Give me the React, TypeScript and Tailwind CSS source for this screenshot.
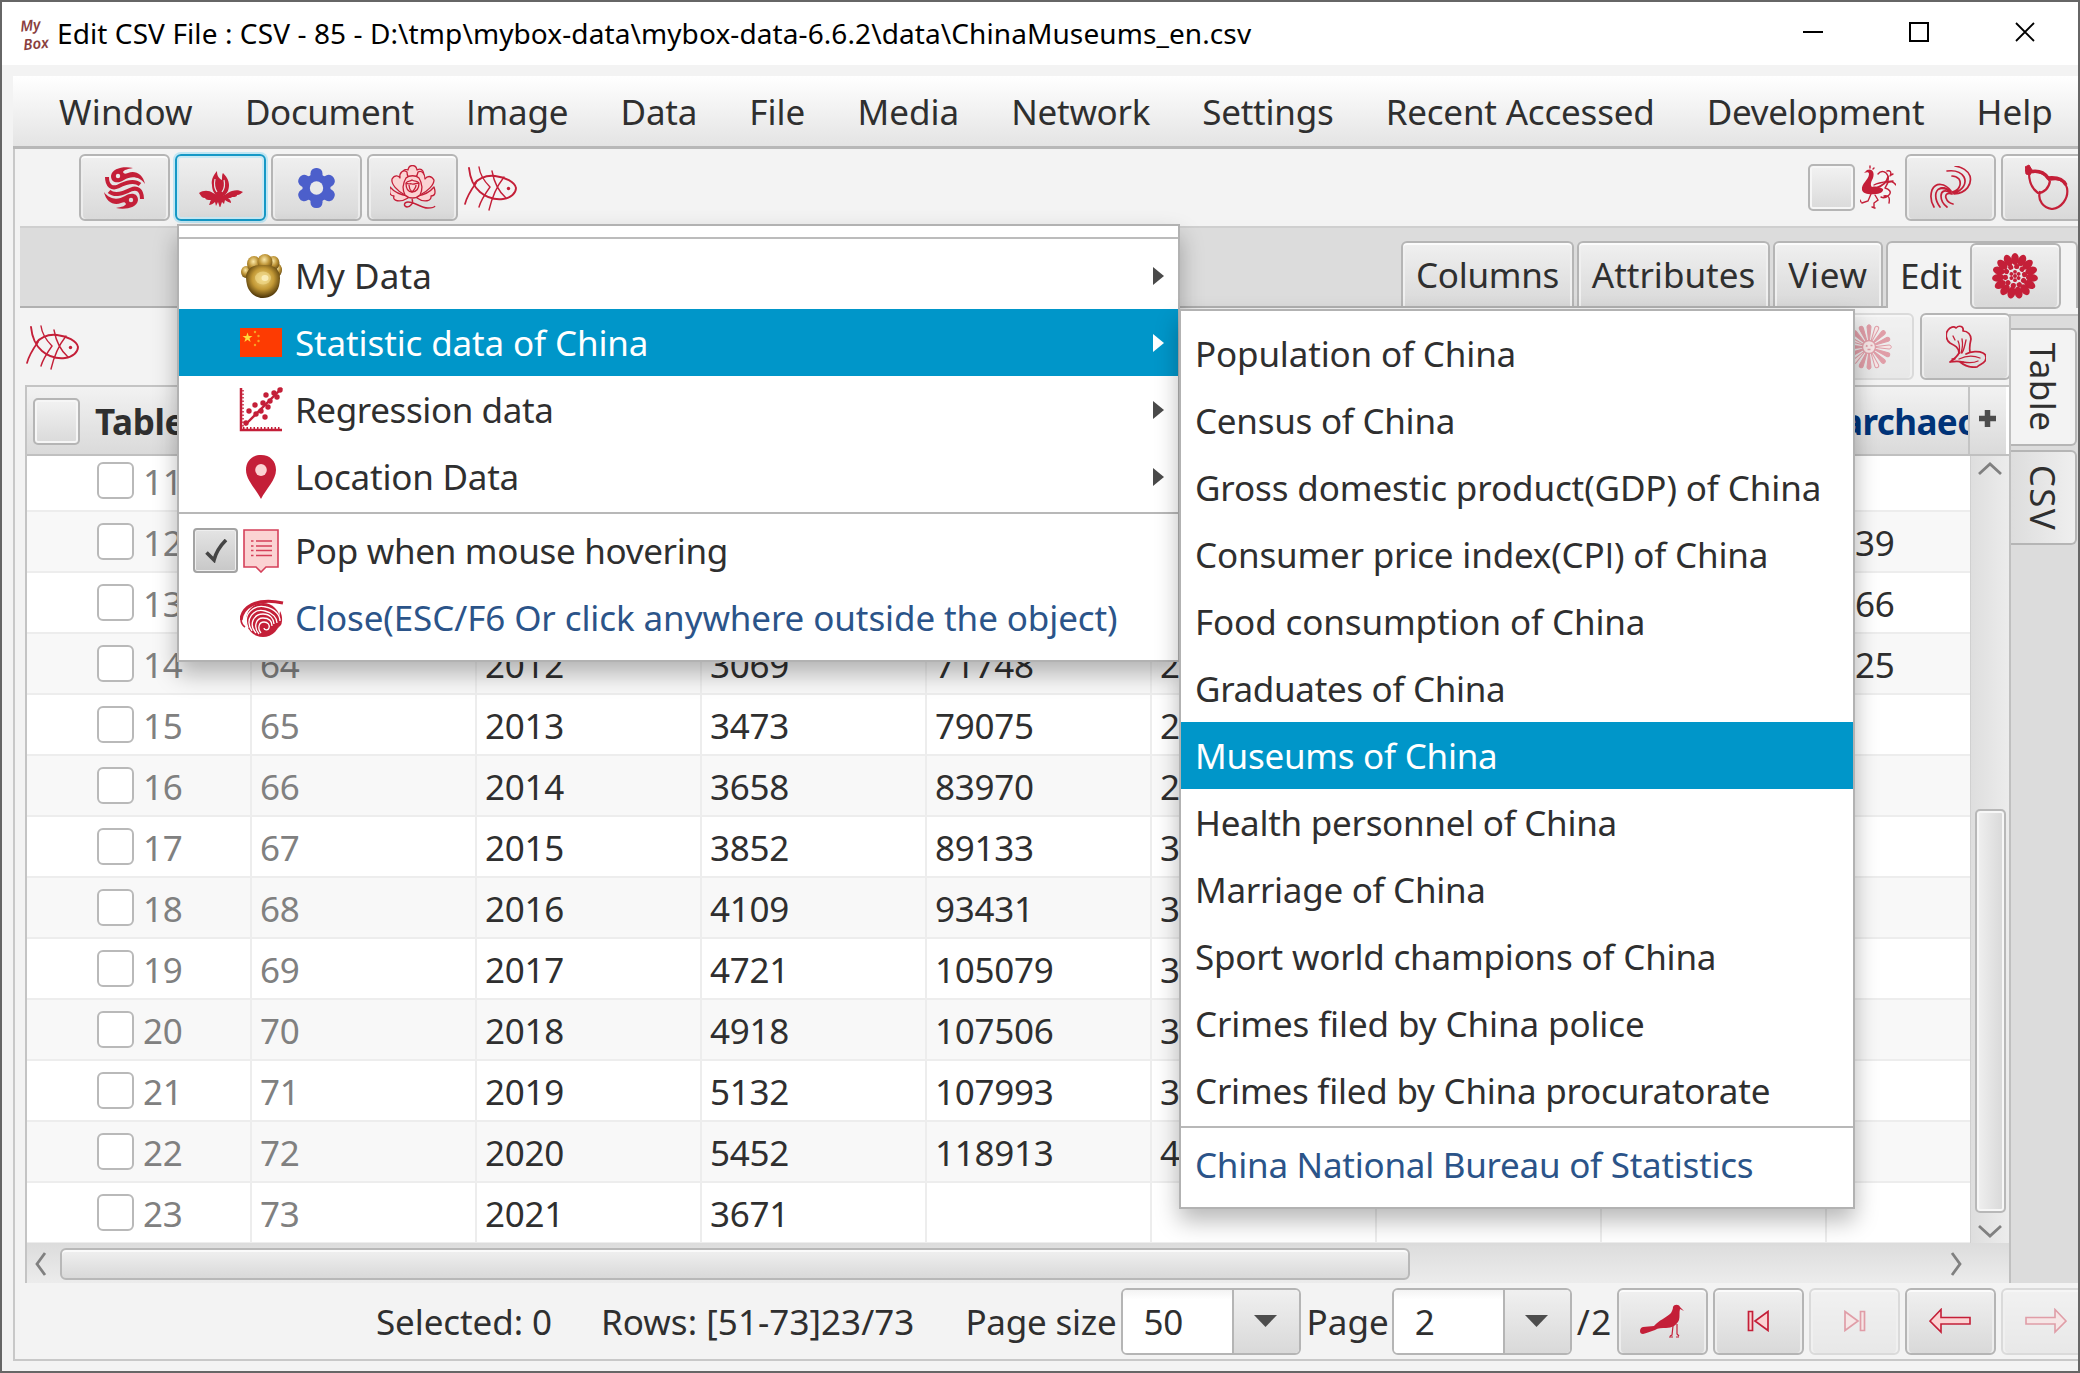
import { useLayoutEffect, useRef, type ReactNode } from "react";

const RED = "#c41f38";
const PINK = "#fbd3d3";

/* Text stretched or tightened by letter spacing so that it fills a given width. */
function Fit({ text, w, className = "" }: { text: string; w: number; className?: string }) {
  const ref = useRef<HTMLSpanElement>(null);
  useLayoutEffect(() => {
    const el = ref.current;
    if (!el) return;
    el.style.letterSpacing = "0px";
    el.style.letterSpacing = `${(w - el.offsetWidth) / text.length}px`;
  }, [text, w]);
  return (
    <span ref={ref} className={`inline-block shrink-0 whitespace-pre ${className}`}>
      {text.split(/(I)/).map((p, i) =>
        p === "I" ? (
          <span key={i} className="font-['Open_Sans']">
            I
          </span>
        ) : (
          p
        ),
      )}
    </span>
  );
}

function Btn({
  children,
  className = "",
  disabled = false,
  focused = false,
}: {
  children?: ReactNode;
  className?: string;
  disabled?: boolean;
  focused?: boolean;
}) {
  return (
    <div
      className={`flex h-[67px] w-[91px] shrink-0 items-center justify-center rounded-[6px] border-2 bg-linear-to-b from-[#f0f0f0] to-[#d9d9d9] ${
        focused
          ? "border-[#1598c6] shadow-[0_0_0_2px_#bfe6f3,inset_0_0_0_2px_#c9e9f4]"
          : "border-[#b5b5b5] shadow-[inset_0_2px_0_#fbfbfb,inset_2px_0_0_#ededed,inset_-2px_0_0_#ededed]"
      } ${disabled ? "opacity-40" : ""} ${className}`}
    >
      {children}
    </div>
  );
}

function Svg({ w, h, children, className = "" }: { w: number; h: number; children: ReactNode; className?: string }) {
  return (
    <svg width={w} height={h} viewBox={`0 0 ${w} ${h}`} fill="none" className={`shrink-0 ${className}`}>
      {children}
    </svg>
  );
}

function Swirl() {
  const fish = "M29 1C20-1 8 1 7 9c0 7 7 8 13 4 7-4 15-4 21 4-2-10-10-14-17-11-3 1-4 1-5-1 1-2 4-3 10-4z";
  return (
    <Svg w={41} h={43} className="mt-[2px]">
      <path d={fish} fill={RED} />
      <path d={fish} fill={RED} transform="rotate(180 20.500 21)" />
      <path d="M3 10C3 19 8 22 14 19.500c8-4 16-7 22-2" stroke={RED} strokeWidth="4" />
      <path d="M38 32c0-9-5-12-11-9.500-8 4-16 7-22 2" stroke={RED} strokeWidth="4" />
      <circle cx="14" cy="9" r="2.200" fill="#ececec" />
      <circle cx="27" cy="33" r="2.200" fill="#e0e0e0" />
    </Svg>
  );
}

function LotusBud() {
  return (
    <Svg w={44} h={36} className="mt-[3px]">
      <path d="M18 0c-4 5-6 9-5 14 0 5 2 9 6 11h5c4-2 6-6 6-11 0-5-3-9-6-12-1 1-1 4-1 7-4-2-5-5-5-9z" fill={RED} />
      <path d="M16 8c-1 5-1 9 2 13M25 9c1 4 1 8-2 12" stroke="#e4e4e4" strokeWidth="1.200" />
      <path d="M0 22c4-3 10-3 14 0l7 3c5 0 8-4 12-5s7-1 11 1c-2 1-3 3-6 3 0 2-3 2-5 2 0 1-3 1-4 1 2 1 3 3 3 5-3-1-5-2-6-3l-1 4-2-2-2 6-2-6-2 4-1-4c-2 2-4 3-6 3 1-2 1-4 2-5-3 0-5 0-6-2-3 0-4-2-6-5z" fill={RED} />
    </Svg>
  );
}

function Gear() {
  return (
    <Svg w={37} h={40} className="mt-[2px]">
      <g fill="#4c5fcb">
        <circle cx="18.500" cy="20" r="14" />
        {[0, 60, 120, 180, 240, 300].map((a) => (
          <rect key={a} x="12.500" y="0" width="12" height="14" rx="5.500" transform={`rotate(${a} 18.500 20)`} />
        ))}
      </g>
      <circle cx="18.500" cy="20" r="6.700" fill="#e9e9e9" />
    </Svg>
  );
}

function Peony() {
  return (
    <Svg w={46} h={44}>
      <g fill={PINK} stroke={RED} strokeWidth="1.300" strokeLinejoin="round">
        <path d="M15 14c-5-6-1-11 3-9 1-6 8-6 9 0 5-3 9 3 5 9z" />
        <path d="M15 30C7 26 1 19 2 14c3-5 7-3 8-1-1-5 3-9 7-6 0 5 3 9 5 12zM30 30c8-4 14-10 14-15-3-5-7-4-9-1 0-5-3-9-7-7-1 5-4 9-6 12z" />
        <path d="M18 31C11 30 4 27 0 22c-1 6 0 9 4 9-2 5 6 7 14 2zM27 31c7-1 13-4 17-9 2 6 1 9-3 9 1 5-7 7-14 2z" />
        <path d="M15 30c-3-6-2-12 1-17 3-3 10-3 13 0 3 5 4 11 1 17-4 4-11 4-15 0z" />
        <path d="M16 18c2-3 4-1 6-3 3 2 5 0 7 3 0 6-3 9-7 9s-6-4-6-9z" />
        <path d="M16 18c3 2 4 0 6 1s4-1 7-1M19 20c0 3 1 5 3 7M26 20c0 3-2 5-4 7" fill="none" />
      </g>
      <path d="M22 34c2 4-2 8-5 8-4-1-3-5 1-5 8 0 12 6 20 6 4 0 6 0 7-2" stroke={RED} strokeWidth="1.400" />
    </Svg>
  );
}

function Fish() {
  return (
    <Svg w={54} h={45} className="mt-[2px] ml-px">
      <g stroke={RED} strokeLinecap="round">
        <path d="M10 18C16 11 22 9 31 10c10 1 20 6 21 12 0 5-5 10-13 11-9 1-16-1-23-7C9 20 6 12 5 2" strokeWidth="1.900" />
        <path d="M12 17C7 24 3 30 1 38" strokeWidth="1.700" />
        <path d="M15 1c1 8 5 14 11 20-5 7-9 13-11 20M28 5c2 11 6 20 14 27M40 11c-7 9-12 20-15 33" strokeWidth="1.400" />
      </g>
      <circle cx="44.500" cy="22.500" r="1.700" fill={RED} />
    </Svg>
  );
}

function Phoenix() {
  return (
    <Svg w={36} h={44}>
      <path d="M7 5c5-2 8 2 6 8-2 4-3 7-1 9 4-1 8 0 11 2 1 3-4 5-8 5-5 1-12 0-13-4C1 18 9 15 9 9 9 7 7 7 4 8c1-1 2-2 3-3z" fill={RED} />
      <g stroke={RED} strokeWidth="1.400" strokeLinecap="round">
        <path d="M10 3V1M13 4l1-1M18 9c3-4 8-3 10 2 1 5 0 8-3 12M30 11c2-4 0-6-3-5M25 23c4 1 7 4 4 7s-6 3-8 2M27 18c4-2 6-2 9 2M11 29l-3 7-6 2M15 30l3 5-4 3 0 5M24 31c5-1 6 2 5 7M14 20c5-3 11-3 19-4M1 37l-1-2M15 43l-3-1M31 10l2-1" />
        <path d="M16 23c6-2 11-6 12-11" strokeWidth="1.800" />
      </g>
    </Svg>
  );
}

function Wind() {
  return (
    <Svg w={42} h={42}>
      <g stroke={RED} strokeLinecap="round">
        <path d="M22 26c7-1 10-8 7-13-2-2-4-3-7-3M23 27c10-2 14-10 11-16-3-5-9-7-17-6M24 28c13-1 18-10 16-18C38 5 32 1 25 0" strokeWidth="1.700" />
        <path d="M21 25c-6-8-15-9-19-1-2 6-1 12 2 17M21 26c-7-6-13-5-15 1-1 5 1 10 4 14M21 27c-6-4-10-2-10 3 0 4 2 8 6 11M22 28c-5-2-7 1-6 4 1 3 3 5 7 6" strokeWidth="1.700" />
      </g>
      <path d="M21 25c-6-5-11-5-13-1 4-2 9 0 13 1z" fill={RED} />
    </Svg>
  );
}

function Gourd() {
  return (
    <Svg w={44} h={46}>
      <path d="M4 1L0 3l1 7 4 1 2-5z" fill={RED} stroke={RED} />
      <path d="M4 9c8-3 16 0 20 7 9-2 16 0 18 8 2 11-6 20-15 21-8-1-15-8-12-18M4 9c0 8 2 15 9 20 6 0 11-5 12-12" stroke={RED} strokeWidth="2.200" />
      <path d="M4 8c9-2 15 0 19 6 9-1 15 1 18 7" stroke={RED} strokeWidth="3.400" />
    </Svg>
  );
}

function Mum() {
  return (
    <Svg w={46} h={46}>
      <g fill={RED}>
        {Array.from({ length: 15 }, (_, i) => (
          <ellipse key={i} cx="23" cy="6" rx="3.900" ry="6" transform={`rotate(${i * 24} 23 23)`} />
        ))}
        {Array.from({ length: 10 }, (_, i) => (
          <circle key={i} cx="23" cy="13.300" r="2.600" transform={`rotate(${i * 36 + 10} 23 23)`} />
        ))}
        {Array.from({ length: 6 }, (_, i) => (
          <circle key={i} cx="23" cy="18.800" r="1.900" transform={`rotate(${i * 60} 23 23)`} />
        ))}
        <circle cx="23" cy="23" r="2" />
      </g>
    </Svg>
  );
}

function Daisy() {
  return (
    <Svg w={46} h={46}>
      {Array.from({ length: 16 }, (_, i) => (
        <path key={i} d="M22.500 16L21 3c0-3 4-3 4 0l-1.500 13z" fill={i % 3 === 1 ? PINK : RED} stroke={RED} strokeWidth="1" transform={`rotate(${i * 22.5} 23 23)`} />
      ))}
      <circle cx="23" cy="23" r="6.500" fill={PINK} stroke={RED} strokeWidth="1.300" />
      <path d="M20 21.500l1.500 1m3-1l2 0m-5 4h3" stroke={RED} strokeWidth="1.600" />
    </Svg>
  );
}

function Petals() {
  return (
    <Svg w={40} h={43}>
      <g stroke={RED} strokeWidth="1.700" strokeLinecap="round" strokeLinejoin="round">
        <path d="M13 28C13 22 8 20 4 18 0 15-1 9 2 5c2-3 6-4 8-2 3-3 8-2 7 3 5 0 8 4 8 8-1 4-2 8-1 13" />
        <path d="M4 37c4-3 7-5 9-9M4 37c5-1 9-1 13 0M20 29c5-3 13-3 17-1 4 2 3 6 2 8-2 3-5 3-8 6-7 1-12-1-17-5" />
        <path d="M13 28c1-5 1-8-1-12M15 28c2-6 2-9 1-14M16 28c2-3 3-8 4-13M13 34c6-3 14-4 21-1M17 37c6 1 11 1 15-1M6 34l3 0M9 15l-2-4" strokeWidth="1.300" />
      </g>
    </Svg>
  );
}

function Paw() {
  return (
    <Svg w={41} h={44}>
      <defs>
        <radialGradient id="gold" cx=".5" cy=".42" r=".58">
          <stop offset="0" stopColor="#f4dc86" />
          <stop offset=".55" stopColor="#c29835" />
          <stop offset="1" stopColor="#4a3307" />
        </radialGradient>
        <radialGradient id="toe" cx=".45" cy=".35" r=".7">
          <stop offset="0" stopColor="#fbe9a8" />
          <stop offset=".5" stopColor="#bd9335" />
          <stop offset="1" stopColor="#5c420f" />
        </radialGradient>
      </defs>
      <ellipse cx="5" cy="18" rx="5" ry="6" fill="url(#toe)" />
      <ellipse cx="36.500" cy="16" rx="4.500" ry="6.500" fill="url(#toe)" />
      <ellipse cx="32.500" cy="9" rx="6" ry="7" fill="url(#toe)" />
      <ellipse cx="13" cy="10" rx="7" ry="8" fill="url(#toe)" />
      <ellipse cx="24" cy="8" rx="7.500" ry="8" fill="url(#toe)" />
      <path d="M7 17c2-5 8-6 14-6 8 0 14 1 16 6 3 4 2 10 1 15-2 8-9 12-16 12S8 39 6 31c-1-5-2-10 1-14z" fill="url(#gold)" />
      <ellipse cx="22" cy="24" rx="8" ry="6.500" fill="#f2dc90" opacity=".6" />
      <ellipse cx="24" cy="24" rx="3.500" ry="3" fill="#fdf3c4" opacity=".8" />
    </Svg>
  );
}

function Flag() {
  return (
    <Svg w={42} h={29}>
      <rect width="42" height="29" fill="#fd3b02" />
      <path d="M7.500 4.500l1.200 3.600h3.800l-3 2.200 1.100 3.700-3.100-2.200L4.400 14l1.100-3.700-3-2.200h3.800z" fill="#ffd83b" />
      <g fill="#f7a324">
        <circle cx="15" cy="4" r="1.200" />
        <circle cx="18.500" cy="8" r="1.200" />
        <circle cx="18.500" cy="13" r="1.200" />
        <circle cx="15" cy="17" r="1.200" />
      </g>
    </Svg>
  );
}

function Scatter() {
  return (
    <Svg w={44} h={45}>
      <path d="M2 1v42h41" stroke={RED} strokeWidth="2.500" />
      <path d="M4 3v38" stroke={RED} strokeWidth="1.500" strokeDasharray="1.5 2" />
      <path d="M4 41h38" stroke={RED} strokeWidth="2" strokeDasharray="1.5 2" />
      <path d="M6 38L43 1" stroke={RED} strokeWidth="2.400" />
      <g fill={RED}>
        {[[7, 36], [10, 24], [16, 18], [17, 27], [22, 24], [24, 16], [27, 8], [31, 14], [26, 30], [35, 6], [38, 10], [41, 3], [29, 20]].map(([x, y]) => (
          <circle key={`${x}-${y}`} cx={x} cy={y} r="2.700" />
        ))}
      </g>
    </Svg>
  );
}

function Pin() {
  return (
    <Svg w={30} h={44}>
      <path d="M15 0C6 0 0 6 0 15c0 10 10 19 15 29 5-10 15-19 15-29C30 6 24 0 15 0z" fill={RED} />
      <ellipse cx="15" cy="15" rx="5.800" ry="6" fill={PINK} />
    </Svg>
  );
}

function NoteIcon() {
  return (
    <Svg w={36} h={44}>
      <path d="M1 1h34v37H23l-5 5-5-5H1z" fill={PINK} stroke="#d5405a" strokeWidth="1.600" />
      <path d="M13 12h16M13 17h16M13 21.500h16M13 26.500h16M8 12h2.500M8 17h2.500M8 21.500h2.500M8 26.500h2.500" stroke="#d5405a" strokeWidth="1.600" />
    </Svg>
  );
}

function Spiral() {
  return (
    <Svg w={44} h={38}>
      <path d="M1 21C2 9 15-2 43 4" stroke={RED} strokeWidth="3.200" />
      <path d="M1 20c0 4 1 6 4 8" stroke={RED} strokeWidth="1.600" />
      <circle cx="23" cy="21" r="17" fill={RED} />
      <path d="M40 12c2 4 3 9 1 14l-3 3z" fill={RED} />
      <g stroke="#fff" strokeWidth="1.300" fill="none">
        <path d="M8 29C2 15 14 5 26 8c9 2 14 8 14 14" />
        <path d="M12 32C4 20 14 9 25 12c8 2 12 7 12 12" />
        <path d="M16 34c-8-9-2-19 7-19 7 0 11 5 11 10" />
        <path d="M19 35c-6-7-3-16 4-16s9 4 9 8" />
        <path d="M21 34c-4-5-2-11 3-11 4 0 6 3 5 6s-5 2-5 0" />
      </g>
    </Svg>
  );
}

function Bird() {
  return (
    <Svg w={44} h={34}>
      <path d="M33 3c1-3 6-3 7 0l4 4-4-2c-1 4 0 7-1 11-2 5-7 8-13 8-4 0-8 0-11 2-4 1-7 3-12 4-4 0-4-6 0-7l11-1c5-6 12-8 17-13 1-2 2-4 2-6z" fill={RED} />
      <path d="M33 22l-1 9-2 1M37 20l0 10 2 2M29 33h4M36 33h3" stroke={RED} strokeWidth="1.200" />
    </Svg>
  );
}

function FirstPage({ flip = false }: { flip?: boolean }) {
  return (
    <Svg w={23} h={22} className={flip ? "-scale-x-100" : ""}>
      <path d="M1.500 1.500h4v19h-4zM21 1.500v19L8 11z" fill={PINK} stroke={RED} strokeWidth="1.700" />
    </Svg>
  );
}

function Arrow({ flip = false }: { flip?: boolean }) {
  return (
    <Svg w={42} h={26} className={flip ? "-scale-x-100" : ""}>
      <path d="M1 13L12 1.500v8h29v6.500H12v8z" fill={PINK} stroke={RED} strokeWidth="1.600" />
    </Svg>
  );
}

function Check({ className = "" }: { className?: string }) {
  return (
    <div
      className={`shrink-0 rounded-[5px] border-2 border-[#b5b5b5] bg-linear-to-b from-[#f2f2f2] to-[#dadada] shadow-[inset_0_0_0_2px_#f6f6f6] ${className}`}
    />
  );
}

function Chevron({ dir }: { dir: "left" | "right" | "up" | "down" }) {
  const d = { left: "M11 1L3 12l8 11", right: "M3 1l8 11-8 11", up: "M1 12L12 2l11 10", down: "M1 2l11 10L23 2" }[dir];
  const vertical = dir === "up" || dir === "down";
  return (
    <Svg w={vertical ? 24 : 14} h={vertical ? 14 : 24}>
      <path d={d} stroke="#808080" strokeWidth="2.800" />
    </Svg>
  );
}

const menus: [string, number][] = [
  ["Window", 134], ["Document", 169], ["Image", 102], ["Data", 76], ["File", 56], ["Media", 102],
  ["Network", 139], ["Settings", 131], ["Recent Accessed", 269], ["Development", 218], ["Help", 76],
];

const rows: string[][] = [
  ["11", "", "", "", "", "", ""],
  ["12", "", "", "", "", "", "39"],
  ["13", "", "", "", "", "", "66"],
  ["14", "64", "2012", "3069", "71748", "2", "25"],
  ["15", "65", "2013", "3473", "79075", "2", ""],
  ["16", "66", "2014", "3658", "83970", "2", ""],
  ["17", "67", "2015", "3852", "89133", "3", ""],
  ["18", "68", "2016", "4109", "93431", "3", ""],
  ["19", "69", "2017", "4721", "105079", "3", ""],
  ["20", "70", "2018", "4918", "107506", "3", ""],
  ["21", "71", "2019", "5132", "107993", "3", ""],
  ["22", "72", "2020", "5452", "118913", "4", ""],
  ["23", "73", "2021", "3671", "", "", ""],
];

const submenu: [string, number][] = [
  ["Population of China", 321], ["Census of China", 260], ["Gross domestic product(GDP) of China", 626],
  ["Consumer price index(CPI) of China", 573], ["Food consumption of China", 450], ["Graduates of China", 310],
  ["Museums of China", 302], ["Health personnel of China", 422], ["Marriage of China", 291],
  ["Sport world champions of China", 521], ["Crimes filed by China police", 450],
  ["Crimes filed by China procuratorate", 575],
];

const mainMenu: { text: string; w: number; icon: ReactNode; active?: boolean }[] = [
  { text: "My Data", w: 137, icon: <Paw /> },
  { text: "Statistic data of China", w: 353, icon: <Flag />, active: true },
  { text: "Regression data", w: 258, icon: <Scatter /> },
  { text: "Location Data", w: 224, icon: <Pin /> },
];

function Num({ text, className = "" }: { text: string; className?: string }) {
  return text ? <Fit text={text} w={text.length * 19.75} className={className} /> : null;
}

function TitleBar() {
  return (
    <div className="flex h-[63px] shrink-0 items-center bg-white pl-[18px] text-black">
      <div className="mr-[5px] flex h-[34px] w-[32px] flex-col text-[15px] leading-[15px] font-semibold text-[#8a3f3f] italic">
        <span className="-rotate-6">My</span>
        <span className="-rotate-6 pt-[4px] pl-[3px]">Box</span>
      </div>
      <Fit text="Edit CSV File : CSV - 85 - D:\tmp\mybox-data\mybox-data-6.6.2\data\ChinaMuseums_en.csv" w={1194} className="mt-[-2px] text-[28px]" />
      <div className="ml-auto flex items-center gap-[86px] pr-[43px] pb-[3px]">
        <div className="h-[2px] w-[20px] bg-black" />
        <div className="h-[20px] w-[20px] border-2 border-black" />
        <Svg w={20} h={20}>
          <path d="M1 1l18 18M19 1L1 19" stroke="#000" strokeWidth="1.800" />
        </Svg>
      </div>
    </div>
  );
}

function Combo({ text }: { text: string }) {
  return (
    <div className="flex h-[67px] w-[180px] shrink-0 rounded-[6px] border-2 border-[#b5b5b5] bg-white">
      <div className="flex flex-1 items-center rounded-l-[4px] bg-linear-to-b from-[#f3f3f3] to-white to-15% pt-[2px] pl-[21px]">
        <Num text={text} />
      </div>
      <div className="flex w-[67px] items-center justify-center rounded-r-[4px] border-l-2 border-[#b5b5b5] bg-linear-to-b from-[#f0f0f0] to-[#d9d9d9]">
        <Svg w={24} h={14}>
          <path d="M0 1h23L11.500 13z" fill="#4d4d4d" />
        </Svg>
      </div>
    </div>
  );
}

function Tab({ text, w, className }: { text: string; w: number; className: string }) {
  return (
    <div className={`mr-[3px] flex h-[65px] items-center justify-center rounded-t-[6px] border-2 border-b-0 border-[#b5b5b5] bg-linear-to-b from-[#f0f0f0] to-[#d9d9d9] shadow-[inset_0_2px_0_#fbfbfb,inset_2px_0_0_#f0f0f0,inset_-2px_0_0_#f0f0f0] ${className}`}>
      <Fit text={text} w={w} />
    </div>
  );
}

function TableView() {
  return (
    <div className="flex h-[898px] w-[1986px] flex-col border-2 border-b-0 border-[#c4c4c4] bg-[#e8e8e8]">
      <div className="flex h-[69px] shrink-0 border-b-2 border-[#c0c0c0] bg-linear-to-b from-[#f2f2f2] to-[#dadada]">
        <div className="flex w-[1943px] items-center overflow-hidden border-r-2 border-[#c4c4c4]">
          <Check className="mt-[2px] ml-[6px] h-[47px] w-[47px]" />
          <Fit text="Table Row" w={172} className="mt-[2px] ml-[15px] font-bold" />
          <Fit text="archaeo" w={136} className="mt-[2px] ml-[1575px] font-bold text-[#003378]" />
        </div>
        <div className="flex flex-1 items-center justify-center border-r-[3px] border-white pr-[2px] pb-[5px]">
          <Svg w={17} h={17}>
            <path d="M8.500 0v17M0 8.500h17" stroke="#4d4d4d" strokeWidth="5.500" />
          </Svg>
        </div>
      </div>
      <div className="flex h-[787px] shrink-0">
        <div className="w-[1944px] overflow-hidden border-r border-[#d0d0d0]">
          <div className="-mt-[5px]">
            {rows.map((r, i) => (
              <div key={r[0]} className={`flex h-[61px] border-b-2 border-[#ededed] ${i % 2 ? "bg-[#f8f8f8]" : "bg-white"}`}>
                <div className="flex w-[225px] items-center border-r-2 border-[#ededed] pl-[70px] text-[#808080]">
                  <div className="mr-[9px] h-[37px] w-[37px] rounded-[6px] border-2 border-[#b9b9b9] bg-white" />
                  <Num text={r[0]} className="mt-[2px]" />
                </div>
                {r.slice(1, 6).map((c, j) => (
                  <div key={j} className={`flex w-[225px] items-center border-r-2 border-[#ededed] pt-[2px] pl-[8px] ${j === 0 ? "text-[#808080]" : ""}`}>
                    <Num text={c} />
                  </div>
                ))}
                <div className="w-[225px] border-r-2 border-[#ededed]" />
                <div className="w-[225px] border-r-2 border-[#ededed]" />
                <div className="flex items-center pt-[2px] pl-[28px]">
                  <Num text={r[6]} />
                </div>
              </div>
            ))}
          </div>
        </div>
        <div className="flex flex-1 flex-col items-center justify-start bg-linear-to-r from-[#dedede] to-[#ececec] py-[6px]">
          <Chevron dir="up" />
          <div className="mt-[333px] mb-[11px] h-[404px] w-[31px] shrink-0 rounded-[5px] border-2 border-[#b8b8b8] bg-linear-to-r from-[#f0f0f0] to-[#d8d8d8] shadow-[inset_0_0_0_2px_#f7f7f7]" />
          <Chevron dir="down" />
        </div>
      </div>
      <div className="flex h-[40px] shrink-0 items-center bg-linear-to-b from-[#dcdcdc] to-[#ececec] pt-[2px] pl-[7px]">
        <Chevron dir="left" />
        <div className="ml-[12px] h-[32px] w-[1350px] rounded-[6px] border-2 border-[#b8b8b8] bg-linear-to-b from-[#f0f0f0] to-[#d9d9d9] shadow-[inset_0_2px_0_#fafafa]" />
        <div className="mr-[46px] ml-auto">
          <Chevron dir="right" />
        </div>
      </div>
    </div>
  );
}

function MainMenu() {
  return (
    <div className="absolute top-[224px] left-[177px] h-[438px] w-[1003px] border-2 border-[#b2b2b2] bg-white pt-[11px] shadow-[0_12px_22px_rgba(0,0,0,0.28)]">
      <div className="mb-[3px] h-[2px] bg-[#bcbcbc]" />
      {mainMenu.map((m) => (
        <div key={m.text} className={`flex h-[67px] items-center ${m.active ? "bg-[#0096c9] text-white" : ""}`}>
          <div className="ml-[60px] flex w-[44px] justify-center">{m.icon}</div>
          <Fit text={m.text} w={m.w} className="ml-[12px]" />
          <Svg w={11} h={18} className="mr-[14px] ml-auto">
            <path d="M0 0l11 9-11 9z" fill={m.active ? "#fff" : "#4a4a4a"} />
          </Svg>
        </div>
      ))}
      <div className="mt-[2px] mb-[3px] h-[2px] bg-[#b8b8b8]" />
      <div className="flex h-[67px] items-center">
        <div className="ml-[14px] flex h-[45px] w-[45px] items-center justify-center rounded-[4px] border-2 border-[#a3a3a3] bg-linear-to-b from-[#e4e4e4] to-[#c8c8c8] shadow-[inset_0_0_0_1px_#efefef]">
          <Svg w={24} h={24}>
            <path d="M2.500 13.500L10 21C12 13 16 7 22 1" stroke="#454545" strokeWidth="3.600" />
          </Svg>
        </div>
        <div className="ml-[1px] flex w-[44px] justify-center">
          <NoteIcon />
        </div>
        <Fit text="Pop when mouse hovering" w={433} className="ml-[12px]" />
      </div>
      <div className="flex h-[67px] items-center text-[#2b5489]">
        <div className="ml-[61px] flex w-[44px] justify-center">
          <Spiral />
        </div>
        <Fit text="Close(ESC/F6 Or click anywhere outside the object)" w={822} className="ml-[11px]" />
      </div>
    </div>
  );
}

function SubMenu() {
  return (
    <div className="absolute top-[309px] left-[1179px] h-[900px] w-[676px] border-2 border-[#b2b2b2] bg-white pt-[9px] shadow-[0_12px_22px_rgba(0,0,0,0.28)]">
      {submenu.map(([t, w]) => (
        <div key={t} className={`flex h-[67px] items-center pl-[14px] ${t.startsWith("Museums") ? "bg-[#0096c9] text-white" : ""}`}>
          <Fit text={t} w={w} />
        </div>
      ))}
      <div className="mt-[2px] mb-[3px] h-[2px] bg-[#b8b8b8]" />
      <div className="flex h-[67px] items-center pl-[14px] text-[#2b5489]">
        <Fit text="China National Bureau of Statistics" w={558} />
      </div>
    </div>
  );
}

export default function App() {
  return (
    <div className="relative h-[1373px] w-[2080px] overflow-hidden border-2 border-[#666666] bg-[#f3f3f3] font-['Noto_Sans','Open_Sans',sans-serif] text-[35px] leading-[48px] text-[#2f2f2f]">
      <TitleBar />
      <div className="mt-[11px] ml-[11px] flex h-[1285px] flex-col border-b-2 border-[#c8c8c8]">
        <div className="flex h-[73px] shrink-0 items-center gap-[52.2px] border-b-[3px] border-[#b8b8b8] bg-linear-to-b from-white to-[#e4e4e4] pt-[2px] pl-[46px]">
          {menus.map(([t, w]) => (
            <Fit key={t} text={t} w={w} />
          ))}
        </div>
        <div className="flex min-h-0 flex-1 flex-col border-l-2 border-[#c8c8c8]">
          <div className="flex h-[77px] shrink-0 items-center pb-[1px] pl-[64px]">
            <div className="flex items-center gap-[5px]">
              <Btn><Swirl /></Btn>
              <Btn focused><LotusBud /></Btn>
              <Btn><Gear /></Btn>
              <Btn><Peony /></Btn>
              <Fish />
            </div>
            <div className="mr-[-14px] ml-auto flex items-center gap-[5px]">
              <Check className="h-[47px] w-[47px]" />
              <Phoenix />
              <Btn className="ml-[4px]"><Wind /></Btn>
              <Btn><Gourd /></Btn>
            </div>
          </div>
          <div className="ml-[5px] flex h-[82px] shrink-0 items-end justify-end border-t-2 border-b-2 border-t-[#cfcfcf] border-b-[#b0b0b0] bg-[#dcdcdc]">
            <Tab text="Columns" w={143} className="w-[173px]" />
            <Tab text="Attributes" w={163} className="w-[193px]" />
            <Tab text="View" w={80} className="w-[110px]" />
            <div className="-mb-[2px] flex h-[67px] w-[192px] items-center rounded-t-[6px] border-2 border-b-0 border-[#b5b5b5] bg-[#f3f3f3] pl-[12px]">
              <Fit text="Edit" w={62} />
              <Btn className="ml-[8px] !h-[66px]"><Mum /></Btn>
            </div>
          </div>
          <div className="flex h-[975px] shrink-0">
            <div className="w-[1996px] shrink-0 pl-[10px]">
              <div className="flex h-[77px] items-center">
                <Fish />
                <div className="ml-auto flex gap-[6px]">
                  <Btn disabled><Daisy /></Btn>
                  <Btn><Petals /></Btn>
                </div>
              </div>
              <TableView />
            </div>
            <div className="mt-[6px] -ml-[2px] flex-1 border-t-2 border-l-2 border-[#c0c0c0] bg-[#dcdcdc] pt-[12px]">
              <div className="flex h-[118px] w-[66px] items-center justify-center rounded-r-[6px] border-2 border-l-0 border-[#b5b5b5] bg-[#f3f3f3]">
                <div className="rotate-90"><Fit text="Table" w={89} /></div>
              </div>
              <div className="mt-[4px] flex h-[95px] w-[66px] items-center justify-center rounded-r-[6px] border-2 border-l-0 border-[#b5b5b5] bg-linear-to-r from-[#dddddd] to-[#efefef]">
                <div className="rotate-90"><Fit text="CSV" w={66} /></div>
              </div>
            </div>
          </div>
          <div className="flex h-[76px] items-center overflow-hidden pl-[361px]">
            <Fit text="Selected: 0" w={176} className="mt-[2px]" />
            <Fit text="Rows: [51-73]23/73" w={313} className="mt-[2px] ml-[49px]" />
            <Fit text="Page size" w={151} className="mt-[2px] mr-[4px] ml-[51px]" />
            <Combo text="50" />
            <Fit text="Page" w={82} className="mt-[2px] mr-[3px] ml-[6px]" />
            <Combo text="2" />
            <Fit text="/2" w={36} className="mt-[2px] mr-[4px] ml-[5px]" />
            <div className="flex shrink-0 gap-[5px]">
              <Btn><Bird /></Btn>
              <Btn><FirstPage /></Btn>
              <Btn disabled><FirstPage flip /></Btn>
              <Btn><Arrow /></Btn>
              <Btn disabled><Arrow flip /></Btn>
            </div>
          </div>
        </div>
      </div>
      {/* Popups are offset by the window frame. */}
      <div className="absolute -top-[2px] -left-[2px] h-[1373px] w-[2080px]">
        <MainMenu />
        <SubMenu />
      </div>
    </div>
  );
}
